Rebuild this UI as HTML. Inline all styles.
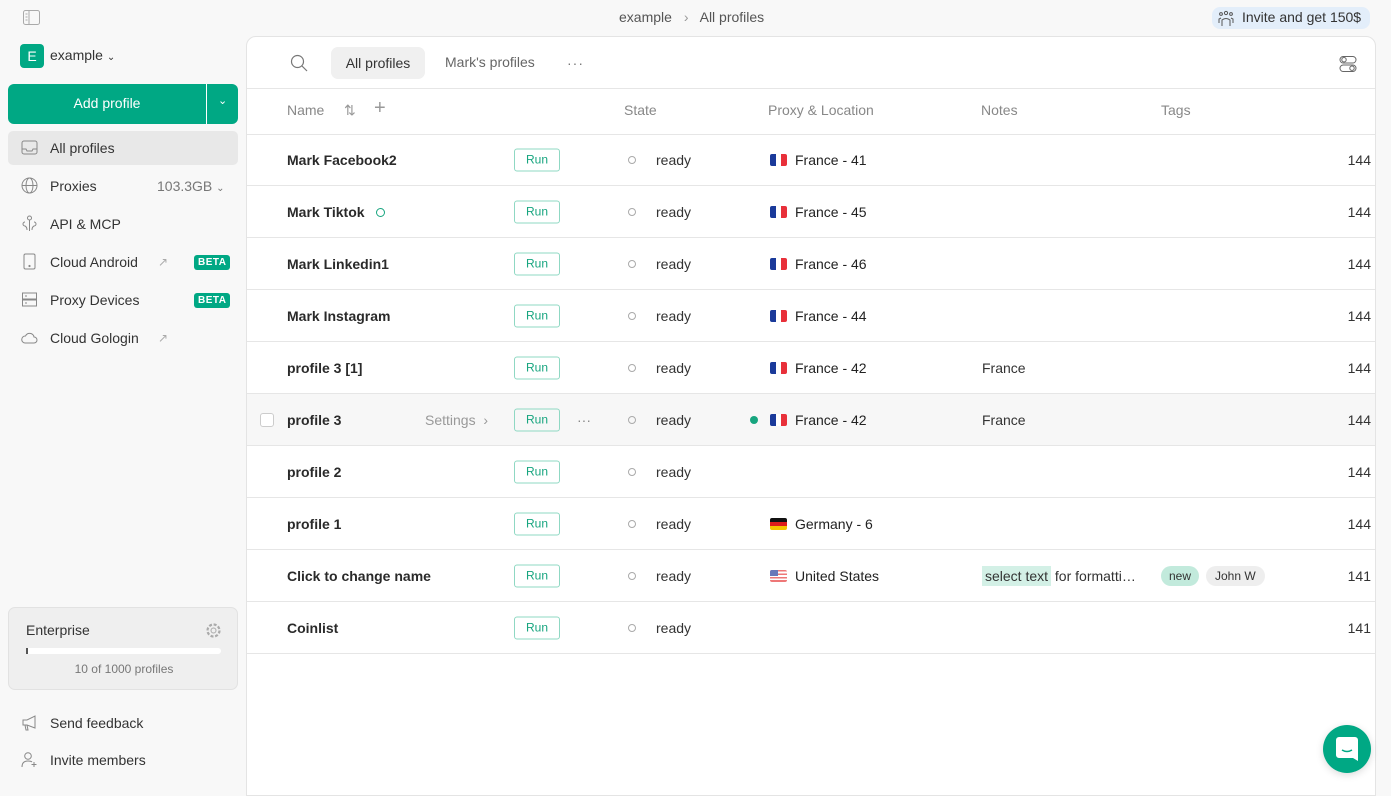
<!DOCTYPE html>
<html><head><meta charset="utf-8"><style>
*{box-sizing:border-box;margin:0;padding:0}
body{width:1391px;height:793px;overflow:hidden;background:#f8f8f8;font-family:"Liberation Sans",sans-serif;font-size:14px;color:#222;position:relative}
.abs{position:absolute}
.side-item{position:absolute;left:8px;width:230px;height:34px;display:flex;align-items:center;padding-left:42px;font-size:14px;color:#333}
.side-item svg{position:absolute;left:13px;top:8px}
.beta{position:absolute;left:186px;top:10px;background:#00a884;color:#fff;font-size:10px;font-weight:bold;padding:2px 4px;border-radius:3px;letter-spacing:.5px}
.main{position:absolute;left:246px;top:36px;width:1130px;height:760px;background:#fff;border:1px solid #e4e4e4;border-radius:10px 10px 0 0;overflow:hidden}
.row{position:absolute;left:0;width:1130px;height:52px;border-bottom:1px solid #e6e6e6}
.row>*{position:absolute;top:50%;transform:translateY(-50%)}
.nm{left:40px;font-weight:bold;color:#2a2a2a;font-size:14px}
.run{left:267px;width:46px;height:23px;border:1px solid #8fd8c3;border-radius:3px;color:#17a57f;font-size:12px;text-align:center;line-height:21px}
.st{left:381px;width:8px;height:8px;border:1px solid #aaa;border-radius:50%}
.rd{left:409px;color:#333}
.fl{left:523px;width:17px;height:12px;border-radius:2px;overflow:hidden;display:flex}
.px{left:548px;color:#222}
.nt{left:735px;color:#333}
.num{right:6px;color:#333}
.hd{position:absolute;top:65px;color:#888;font-size:14px}
</style></head><body>
<svg class="abs" style="left:23px;top:10px" width="17" height="15" viewBox="0 0 17 15"><rect x=".5" y=".5" width="16" height="14" rx="2" fill="none" stroke="#aaa"/><line x1="6" y1="1" x2="6" y2="14" stroke="#aaa"/><path d="M2.5 4h2M2.5 7h2M2.5 10h2" stroke="#aaa"/></svg>
<div class="abs" style="left:619px;top:9px;color:#555">example <span style="color:#999;margin:0 8px">›</span> All profiles</div>
<div class="abs" style="left:1212px;top:7px;height:22px;width:158px;background:#e3eefa;border-radius:8px;font-size:14px;color:#333;padding:2px 0 0 30px">Invite and get 150$</div>
<svg class="abs" style="left:1217px;top:10px" width="18" height="17" viewBox="0 0 18 17" fill="none" stroke="#555"><circle cx="9" cy="3" r="1.6"/><circle cx="4" cy="4" r="1.4"/><circle cx="14" cy="4" r="1.4"/><path d="M5 16v-6q4-3 8 0v6M2 13v-4l2-1M16 13v-4l-2-1"/></svg>

<div class="abs" style="left:20px;top:44px;width:24px;height:24px;background:#00a884;border-radius:4px;color:#fff;text-align:center;line-height:24px;font-size:14px">E</div>
<div class="abs" style="left:50px;top:47px;color:#333">example <span style="font-size:10px">⌄</span></div>
<div class="abs" style="left:8px;top:84px;width:230px;height:40px;background:#00a884;border-radius:6px;color:#fff;font-size:14px"><div style="position:absolute;left:0;width:198px;text-align:center;top:11px">Add profile</div><div style="position:absolute;left:198px;top:0;width:1px;height:40px;background:#fff"></div><div style="position:absolute;left:210px;top:10px;font-size:11px">⌄</div></div>
<div class="side-item" style="top:131px;background:#e8e8e8;border-radius:5px"><svg width="17" height="17" viewBox="0 0 17 17" fill="none" stroke="#888"><rect x="1" y="2" width="15" height="13" rx="2"/><path d="M1 10h4l1 2h5l1-2h4"/></svg>All profiles</div>
<div class="side-item" style="top:169px"><svg width="17" height="17" viewBox="0 0 17 17" fill="none" stroke="#888"><circle cx="8.5" cy="8.5" r="7.5"/><ellipse cx="8.5" cy="8.5" rx="3.5" ry="7.5"/><path d="M1 8.5h15"/></svg>Proxies<span style="position:absolute;left:149px;color:#777">103.3GB <span style="font-size:10px">⌄</span></span></div>
<div class="side-item" style="top:207px"><svg width="17" height="17" viewBox="0 0 17 17" fill="none" stroke="#888"><circle cx="8.5" cy="3" r="2"/><path d="M8.5 5v11M4 7a2 2 0 1 0 0 4q2 1 2 4M13 7a2 2 0 1 1 0 4q-2 1-2 4"/></svg>API &amp; MCP</div>
<div class="side-item" style="top:245px"><svg width="17" height="17" viewBox="0 0 17 17" fill="none" stroke="#888"><rect x="3" y="1" width="11" height="15" rx="1.5"/><circle cx="8.5" cy="13" r=".6" fill="#888"/></svg>Cloud Android<span style="position:absolute;left:150px;color:#aaa;font-size:12px">↗</span><span class="beta">BETA</span></div>
<div class="side-item" style="top:283px"><svg width="17" height="17" viewBox="0 0 17 17" fill="none" stroke="#888"><rect x="1.5" y="2" width="14" height="6"/><rect x="1.5" y="9" width="14" height="6"/><path d="M4 5h2M4 12h2"/></svg>Proxy Devices<span class="beta">BETA</span></div>
<div class="side-item" style="top:321px"><svg width="17" height="17" viewBox="0 0 17 17" fill="none" stroke="#888"><path d="M4 14h9a3 3 0 0 0 0-6 4.5 4.5 0 0 0-8.5-1A3.5 3.5 0 0 0 4 14z"/></svg>Cloud Gologin<span style="position:absolute;left:150px;color:#aaa;font-size:12px">↗</span></div>

<div class="abs" style="left:8px;top:607px;width:230px;height:83px;background:#efefef;border:1px solid #e2e2e2;border-radius:7px">
<div class="abs" style="left:17px;top:14px;color:#333">Enterprise</div>
<svg class="abs" style="left:196px;top:14px" width="17" height="17" viewBox="0 0 17 17" fill="none" stroke="#aaa"><circle cx="8.5" cy="8.5" r="2.5"/><circle cx="8.5" cy="8.5" r="6" stroke-dasharray="3 1.7" stroke-width="2.2"/></svg>
<div class="abs" style="left:17px;top:40px;width:195px;height:6px;background:#fff;border-radius:3px"><div style="width:2px;height:6px;background:#555"></div></div>
<div class="abs" style="left:0;width:230px;top:54px;text-align:center;font-size:12px;color:#777">10 of 1000 profiles</div>
</div>
<div class="side-item" style="top:706px"><svg width="17" height="17" viewBox="0 0 17 17" fill="none" stroke="#888"><path d="M2 6h4l8-4v12l-8-3H2zM4 11l1 5h2l-1-5"/></svg>Send feedback</div>
<div class="side-item" style="top:743px"><svg width="17" height="17" viewBox="0 0 17 17" fill="none" stroke="#888"><circle cx="7" cy="5" r="3.3"/><path d="M1 16q0-6 6-6 3 0 4 1M13 11v5M10.5 13.5h5"/></svg>Invite members</div>

<div class="main">
<svg class="abs" style="left:43px;top:17px" width="18" height="18" viewBox="0 0 18 18" fill="none" stroke="#777" stroke-width="1.2"><circle cx="7.5" cy="7.5" r="6"/><path d="M12 12l5 5"/></svg>
<div class="abs" style="left:84px;top:10px;width:94px;height:32px;background:#f0f0f0;border-radius:7px;text-align:center;line-height:32px;color:#333">All profiles</div>
<div class="abs" style="left:198px;top:17px;color:#666">Mark's profiles</div>
<div class="abs" style="left:320px;top:18px;color:#777;letter-spacing:1px">···</div>
<svg class="abs" style="left:1092px;top:18px" width="18" height="18" viewBox="0 0 18 18" fill="none" stroke="#666"><rect x="1" y="1.5" width="16" height="6.5" rx="3.2"/><rect x="1" y="10" width="16" height="6.5" rx="3.2"/><circle cx="5" cy="4.7" r="2.2"/><circle cx="13" cy="13.2" r="2.2"/></svg>
<div class="abs" style="left:0;top:51px;width:1130px;border-top:1px solid #e6e6e6"></div>
<div class="hd" style="left:40px">Name</div>
<div class="hd" style="left:97px;color:#999">⇅</div>
<div class="hd" style="left:127px;font-size:20px;top:60px;color:#999">+</div>
<div class="hd" style="left:377px">State</div>
<div class="hd" style="left:521px">Proxy &amp; Location</div>
<div class="hd" style="left:734px">Notes</div>
<div class="hd" style="left:914px">Tags</div>
<div class="abs" style="left:0;top:97px;width:1130px;border-top:1px solid #e6e6e6"></div>

<div style="position:absolute;left:0;top:97px">
<div class="row" style="top:0"><span class="nm">Mark Facebook2</span><span class="run">Run</span><span class="st"></span><span class="rd">ready</span><span class="fl"><i style="flex:1;background:#1a3a9a"></i><i style="flex:1;background:#fff"></i><i style="flex:1;background:#e8303a"></i></span><span class="px">France - 41</span><span class="num">144</span></div>
<div class="row" style="top:52px"><span class="nm">Mark Tiktok <span style="display:inline-block;width:9px;height:9px;border:1.5px solid #17a57f;border-radius:50%;margin-left:8px"></span></span><span class="run">Run</span><span class="st"></span><span class="rd">ready</span><span class="fl"><i style="flex:1;background:#1a3a9a"></i><i style="flex:1;background:#fff"></i><i style="flex:1;background:#e8303a"></i></span><span class="px">France - 45</span><span class="num">144</span></div>
<div class="row" style="top:104px"><span class="nm">Mark Linkedin1</span><span class="run">Run</span><span class="st"></span><span class="rd">ready</span><span class="fl"><i style="flex:1;background:#1a3a9a"></i><i style="flex:1;background:#fff"></i><i style="flex:1;background:#e8303a"></i></span><span class="px">France - 46</span><span class="num">144</span></div>
<div class="row" style="top:156px"><span class="nm">Mark Instagram</span><span class="run">Run</span><span class="st"></span><span class="rd">ready</span><span class="fl"><i style="flex:1;background:#1a3a9a"></i><i style="flex:1;background:#fff"></i><i style="flex:1;background:#e8303a"></i></span><span class="px">France - 44</span><span class="num">144</span></div>
<div class="row" style="top:208px"><span class="nm">profile 3 [1]</span><span class="run">Run</span><span class="st"></span><span class="rd">ready</span><span class="fl"><i style="flex:1;background:#1a3a9a"></i><i style="flex:1;background:#fff"></i><i style="flex:1;background:#e8303a"></i></span><span class="px">France - 42</span><span class="nt">France</span><span class="num">144</span></div>
<div class="row" style="top:260px;background:#f7f7f7"><span style="left:13px;width:14px;height:14px;border:1px solid #ccc;border-radius:3px;background:#fff"></span><span class="nm">profile 3</span><span style="left:178px;color:#999">Settings &nbsp;›</span><span class="run">Run</span><span style="left:330px;color:#888">···</span><span class="st"></span><span class="rd">ready</span><span style="left:503px;width:8px;height:8px;background:#17a57f;border-radius:50%"></span><span class="fl"><i style="flex:1;background:#1a3a9a"></i><i style="flex:1;background:#fff"></i><i style="flex:1;background:#e8303a"></i></span><span class="px">France - 42</span><span class="nt">France</span><span class="num">144</span></div>
<div class="row" style="top:312px"><span class="nm">profile 2</span><span class="run">Run</span><span class="st"></span><span class="rd">ready</span><span class="num">144</span></div>
<div class="row" style="top:364px"><span class="nm">profile 1</span><span class="run">Run</span><span class="st"></span><span class="rd">ready</span><span class="fl" style="flex-direction:column"><i style="flex:1;background:#111"></i><i style="flex:1;background:#dd1c1c"></i><i style="flex:1;background:#f5c400"></i></span><span class="px">Germany - 6</span><span class="num">144</span></div>
<div class="row" style="top:416px"><span class="nm">Click to change name</span><span class="run">Run</span><span class="st"></span><span class="rd">ready</span><span class="fl" style="background:repeating-linear-gradient(#e77 0 1.7px,#fff 1.7px 3.4px)"><i style="width:8px;height:6px;background:#6a78b8"></i></span><span class="px">United States</span><span class="nt"><span style="background:#d3f0e6;padding:2px 3px">select text</span> for formatti…</span><span style="left:914px;background:#c2eadc;border-radius:10px;padding:3px 8px;font-size:12px;color:#333">new</span><span style="left:959px;background:#eeeeee;border-radius:10px;padding:3px 9px;font-size:12px;color:#333">John W</span><span class="num">141</span></div>
<div class="row" style="top:468px"><span class="nm">Coinlist</span><span class="run">Run</span><span class="st"></span><span class="rd">ready</span><span class="num">141</span></div>
</div>
</div>
<div class="abs" style="left:1323px;top:725px;width:48px;height:48px;border-radius:50%;background:#00a884;box-shadow:0 2px 8px rgba(0,0,0,.15)"><svg style="position:absolute;left:13px;top:12px" width="22" height="24" viewBox="0 0 22 24"><path d="M3 0h16a3 3 0 0 1 3 3v21l-5-3H3a3 3 0 0 1-3-3V3a3 3 0 0 1 3-3z" fill="#fff"/><path d="M6 13q5 3 10 0" stroke="#00a884" stroke-width="1.6" fill="none"/></svg></div>
</body></html>
